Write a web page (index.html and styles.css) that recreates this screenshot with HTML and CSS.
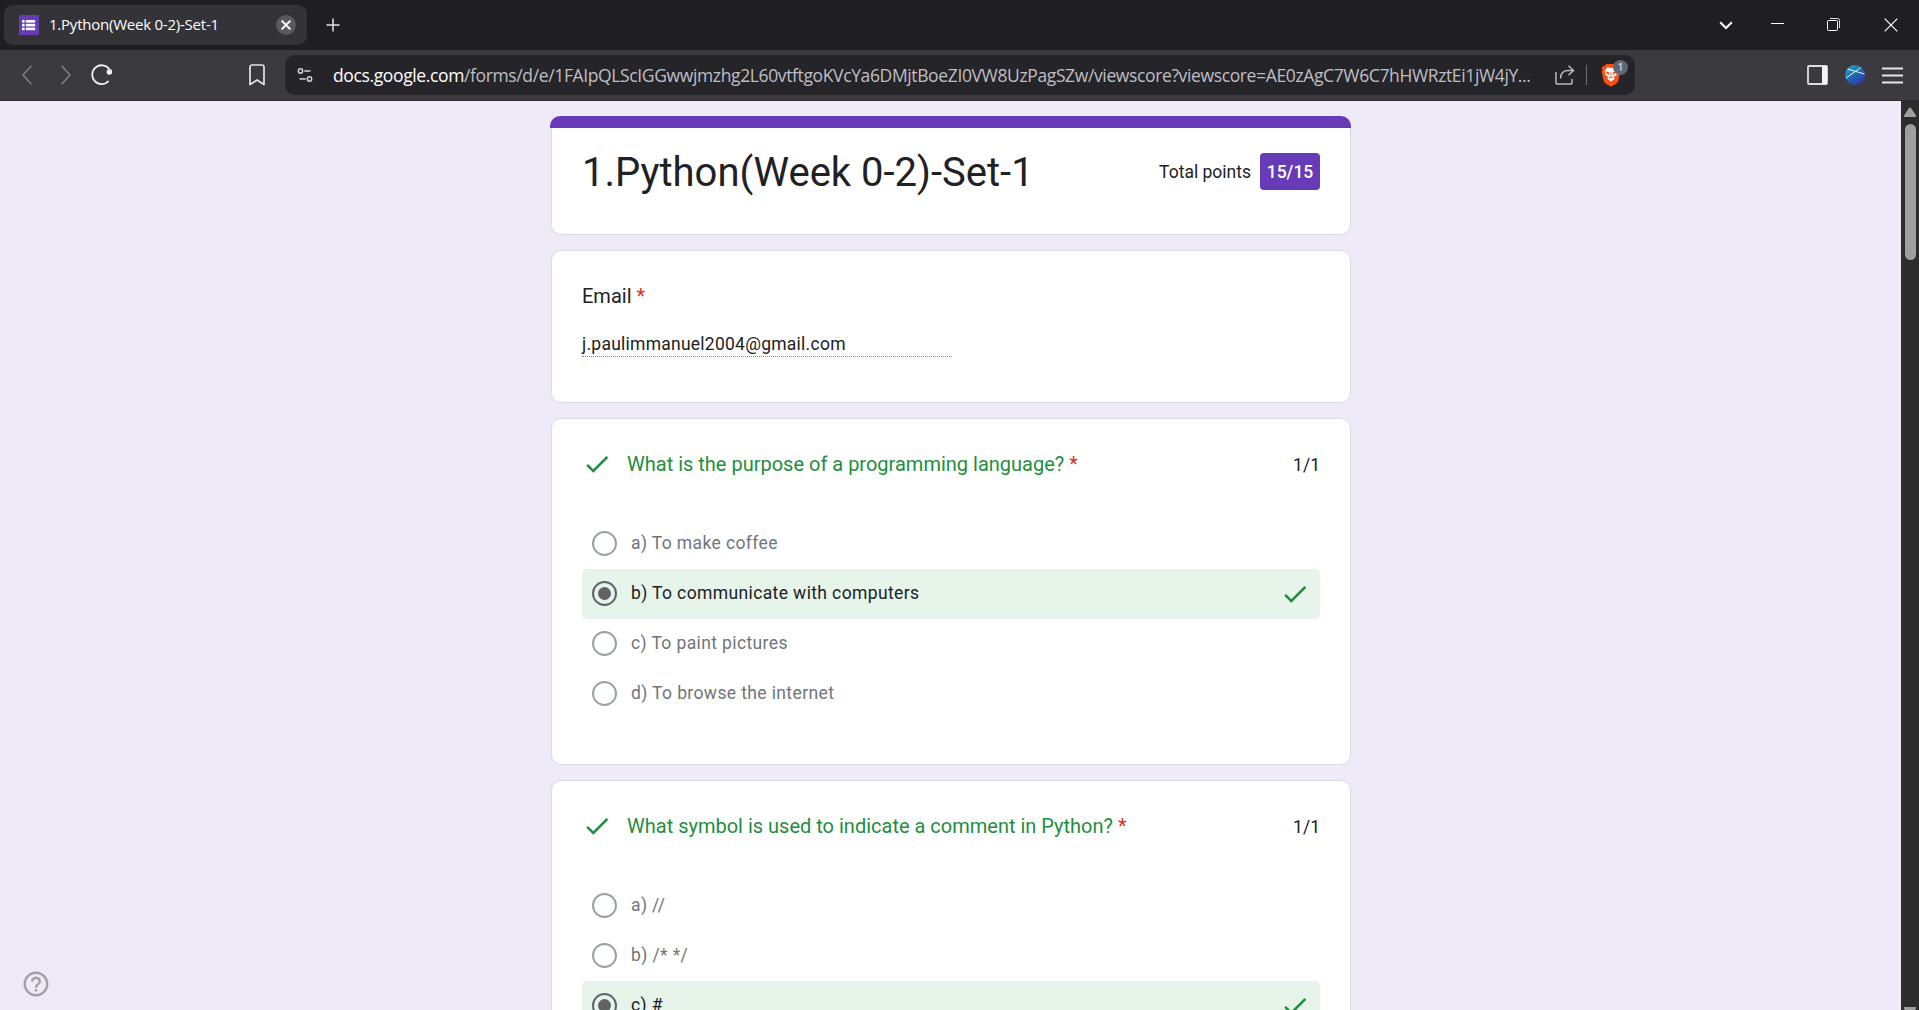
FILE: index.html
```html
<!DOCTYPE html>
<html lang="en">
<head>
<meta charset="utf-8">
<title>1.Python(Week 0-2)-Set-1</title>
<link rel="stylesheet" href="styles.css">
</head>
<body>
<header class="browser">
  <div class="tabstrip">
    <div class="tab">
      <svg class="favicon" viewBox="0 0 20 20"><rect width="20" height="20" rx="1" fill="#673ab7"/><g fill="#fff"><rect x="3" y="5" width="2.6" height="2.6"/><rect x="3" y="8.8" width="2.6" height="2.6"/><rect x="3" y="12.6" width="2.6" height="2.6"/><rect x="6.8" y="5" width="9.4" height="2.6"/><rect x="6.8" y="8.8" width="9.4" height="2.6"/><rect x="6.8" y="12.6" width="9.4" height="2.6"/></g></svg>
      <span class="tab-title">1.Python(Week 0-2)-Set-1</span>
      <svg class="tab-close" viewBox="0 0 20 20"><circle cx="10" cy="10" r="10" fill="#5a595d"/><path d="M5.6 5.6l8.8 8.8M14.4 5.6l-8.8 8.8" stroke="#fff" stroke-width="2"/></svg>
    </div>
    <svg class="new-tab" viewBox="0 0 14 14"><path d="M7 .5v13M.5 7h13" stroke="#e4e4e6" stroke-width="1.5"/></svg>
    <div class="window-controls">
      <svg width="14" height="14" viewBox="0 0 14 14"><path d="M1.2 4.2L7 10l5.800-5.800" fill="none" stroke="#fff" stroke-width="2"/></svg>
      <svg width="13" height="14" viewBox="0 0 13 14"><path d="M0 5.500h13" stroke="#fff"/></svg>
      <svg width="13" height="14" viewBox="0 0 13 14"><rect x=".5" y="2.500" width="10" height="10" rx="1" fill="none" stroke="#fff"/><path d="M3 .5h7.500a2 2 0 0 1 2 2V10" fill="none" stroke="#ddd"/></svg>
      <svg width="14" height="14" viewBox="0 0 14 14"><path d="M.7.7l12.600 12.600M13.300.7L.7 13.300" stroke="#fff" stroke-width="1.200"/></svg>
    </div>
  </div>
  <div class="toolbar">
    <svg class="nav-back" viewBox="0 0 10 20"><path d="M9.500.8L1 10l8.500 9.200" fill="none" stroke="#818085" stroke-width="1.500"/></svg>
    <svg class="nav-forward" viewBox="0 0 10 20"><path d="M.5.8L9 10 .5 19.200" fill="none" stroke="#818085" stroke-width="1.500"/></svg>
    <svg class="nav-reload" viewBox="0 0 22 22"><path d="M17.600 17A9.400 9.400 0 1 1 18.300 5.200" fill="none" stroke="#f3f3f4" stroke-width="1.800"/><path d="M20.300 4.800l.8 4.600-4.400-.4z" fill="#f3f3f4"/><circle cx="18.300" cy="8" r="2.700" fill="#f3f3f4"/></svg>
    <svg class="nav-bookmark" viewBox="0 0 16 22"><path d="M3 1h10a2 2 0 0 1 2 2v17.500l-7-4.500-7 4.500V3a2 2 0 0 1 2-2z" fill="none" stroke="#e3e3e5" stroke-width="1.700" stroke-linejoin="round"/></svg>
    <div class="address">
      <svg class="site-info" viewBox="0 0 16 16"><g fill="none" stroke="#d6d6d9" stroke-width="1.600"><circle cx="3.200" cy="3.200" r="2.300"/><path d="M7.200 3.200h6.600"/><circle cx="12.800" cy="11.700" r="2.300"/><path d="M2.200 11.700h6.600"/></g></svg>
      <span class="url"><span class="host">docs.google.com</span>/forms/d/e/1FAIpQLScIGGwwjmzhg2L60vtftgoKVcYa6DMjtBoeZI0VW8UzPagSZw/viewscore?viewscore=AE0zAgC7W6C7hHWRztEi1jW4jY...</span>
      <svg class="share" viewBox="0 0 20 20"><path d="M1 7v10.200A1.800 1.800 0 0 0 2.800 19h12.400a1.800 1.800 0 0 0 1.800-1.800V14M5.500 13.500C5.500 8.500 8 5.800 13 5.500h5M13.500.8l5 4.700-5 4.700" fill="none" stroke="#b9b9bd" stroke-width="1.500"/></svg>
      <span class="divider"></span>
      <div class="shield">
        <svg viewBox="0 0 20 24"><path d="M5.300 1h9.400l1.700 1.900 1.500-.1 1.500 2.700-.6 1.700.6 1.700-2.300 9.400c-.5 1.500-1.600 2.200-7.100 5.400-5.500-3.200-6.600-3.900-7.100-5.400L.6 8.900l.6-1.700-.6-1.700 1.500-2.700 1.500.1z" fill="#fb5013"/><path d="M6.200 4.300l3.800.7 3.800-.7 2.600 3.600-.8 4-3 2 1.200 1.600-3.800 3.200-3.800-3.200 1.200-1.600-3-2-.8-4z" fill="#fff"/><path d="M4.800 8.800l3.200.8-.6 2zM15.200 8.800l-3.200.8.6 2zM10 9v4.500M8 14l2 .8 2-.8" fill="#fb5013" stroke="#fb5013" stroke-width=".8"/></svg>
        <span class="count">1</span>
      </div>
    </div>
    <svg class="sidebar-icon" viewBox="0 0 21 20"><rect x="1" y="1" width="19" height="18" rx="1" fill="none" stroke="#dededf" stroke-width="1.800"/><path d="M15 1h5v18h-5z" fill="#f4f4f6"/></svg>
    <svg class="profile" viewBox="0 0 20 20"><defs><linearGradient id="sky" x1="0" y1="0" x2=".7" y2="1"><stop offset="0" stop-color="#35b3cc"/><stop offset=".5" stop-color="#176fb0"/><stop offset="1" stop-color="#3b36a8"/></linearGradient></defs><circle cx="10" cy="10" r="10" fill="url(#sky)"/><path d="M1 13L16 2.500M2.500 4l17 5" stroke="#e4f5fb" stroke-width="1"/></svg>
    <svg class="menu" viewBox="0 0 21 17"><path d="M0 1.500h21M0 8.500h21M0 15.500h21" stroke="#e6e6e8" stroke-width="1.800"/></svg>
  </div>
</header>
<div class="viewport">
  <main class="page">
    <section class="card title-card">
      <div class="title-bar"></div>
      <div class="title-row">
        <h1>1.Python(Week 0-2)-Set-1</h1>
        <div class="total">Total points<span class="score">15/15</span></div>
      </div>
    </section>
    <section class="card email-card">
      <div class="label">Email <span class="req">*</span></div>
      <div class="email-value">j.paulimmanuel2004@gmail.com</div>
    </section>
    <section class="card question">
      <div class="q-head">
        <svg class="check" viewBox="0 0 24 24"><path d="M9 16.170L4.830 12l-1.420 1.410L9 19 21 7l-1.410-1.410z"/></svg>
        <h2>What is the purpose of a programming language? <span class="req">*</span></h2>
        <span class="q-score">1/1</span>
      </div>
      <div class="options">
        <div class="option"><i class="radio"></i><span>a) To make coffee</span></div>
        <div class="option chosen"><i class="radio"></i><span>b) To communicate with computers</span><svg class="check" viewBox="0 0 24 24"><path d="M9 16.170L4.830 12l-1.420 1.410L9 19 21 7l-1.410-1.410z"/></svg></div>
        <div class="option"><i class="radio"></i><span>c) To paint pictures</span></div>
        <div class="option"><i class="radio"></i><span>d) To browse the internet</span></div>
      </div>
    </section>
    <section class="card question">
      <div class="q-head">
        <svg class="check" viewBox="0 0 24 24"><path d="M9 16.170L4.830 12l-1.420 1.410L9 19 21 7l-1.410-1.410z"/></svg>
        <h2>What symbol is used to indicate a comment in Python? <span class="req">*</span></h2>
        <span class="q-score">1/1</span>
      </div>
      <div class="options">
        <div class="option"><i class="radio"></i><span>a) //</span></div>
        <div class="option"><i class="radio"></i><span>b) /* */</span></div>
        <div class="option chosen"><i class="radio"></i><span>c) #</span><svg class="check" viewBox="0 0 24 24"><path d="M9 16.170L4.830 12l-1.420 1.410L9 19 21 7l-1.410-1.410z"/></svg></div>
      </div>
    </section>
  </main>
  <div class="scrollbar">
    <svg width="14" height="11" viewBox="0 0 14 11"><path d="M6 1a1.300 1.300 0 0 1 2 0l5 7.500a1 1 0 0 1-.8 1.500H1.800A1 1 0 0 1 1 8.500z" fill="#9f9f9f"/></svg>
    <div class="thumb"></div>
    <svg class="down" width="14" height="11" viewBox="0 0 14 11"><path d="M6 10a1.300 1.300 0 0 0 2 0l5-7.500A1 1 0 0 0 12.200 1H1.800A1 1 0 0 0 1 2.500z" fill="#9f9f9f"/></svg>
  </div>
  <svg class="help" viewBox="0 0 24 24"><path d="M11 18h2v-2h-2v2zm1-16C6.480 2 2 6.480 2 12s4.480 10 10 10 10-4.480 10-10S17.520 2 12 2zm0 18c-4.410 0-8-3.590-8-8s3.590-8 8-8 8 3.590 8 8-3.590 8-8 8zm0-14c-2.210 0-4 1.790-4 4h2c0-1.100.9-2 2-2s2 .9 2 2c0 2-3 1.750-3 5h2c0-2.250 3-2.500 3-5 0-2.210-1.790-4-4-4z" fill="#a3a1a8"/></svg>
</div>
</body>
</html>
```

FILE: styles.css
```css
* { box-sizing: border-box; }

body {
  margin: 0;
  width: 100vw;
  height: 100vh;
  overflow: hidden;
  display: flex;
  flex-direction: column;
  font-family: Roboto, "Liberation Sans", sans-serif;
  color: #202124;
  background: #eeeaf8;
}

svg { display: block; flex: none; }

/* Browser chrome */
.browser { flex: none; font-family: "Open Sans", "Noto Sans", sans-serif; }

.tabstrip {
  height: 50px;
  display: flex;
  align-items: center;
  padding: 0 16px 0 4px;
  background: #1f1e23;
}

.tab {
  width: 303px;
  height: 40px;
  display: flex;
  align-items: center;
  padding: 0 11px 0 15px;
  border-radius: 9px;
  background: #343338;
}

.favicon { width: 20px; height: 20px; }

.tab-title {
  flex: 1;
  margin: -2px 0 0 10px;
  font-size: 15px;
  line-height: 20px;
  letter-spacing: -0.23px;
  color: #fff;
  white-space: nowrap;
}

.tab-close { width: 20px; height: 20px; }
.new-tab { width: 14px; height: 14px; margin-left: 19px; }

.window-controls {
  margin-left: auto;
  display: flex;
  align-items: center;
  gap: 43px;
  padding-right: 5px;
}

.window-controls svg:first-child { margin-right: -5px; }
.window-controls svg:last-child { margin-left: 1px; }

.toolbar {
  height: 51px;
  display: flex;
  align-items: center;
  padding: 0 16px 0 22px;
  background: #3b3a3f;
  border-bottom: 1px solid #2e2d32;
}

.nav-back { width: 10px; height: 20px; }
.nav-forward { width: 10px; height: 20px; margin-left: 29px; }
.nav-reload { width: 22px; height: 22px; margin-left: 20px; }
.nav-bookmark { width: 16px; height: 22px; margin-left: 136px; }

.address {
  width: 1350px;
  height: 40px;
  display: flex;
  align-items: center;
  margin-left: 20px;
  padding-left: 12px;
  border-radius: 10px;
  background: #252429;
}

.site-info { width: 16px; height: 15px; }

.url {
  width: 1198px;
  margin: -1px 0 0 20px;
  font-size: 17.5px;
  line-height: 24px;
  letter-spacing: -0.37px;
  color: #bfbfc4;
  white-space: nowrap;
}

.host { color: #fff; }
.share { width: 20px; height: 20px; margin-left: 24px; }
.divider { width: 1px; height: 20px; margin-left: 11px; background: #6c6b70; }
.shield { position: relative; margin-left: 14px; }
.shield svg { width: 20px; height: 24px; }

.count {
  position: absolute;
  left: 12px;
  top: -3px;
  width: 15px;
  height: 15px;
  border-radius: 50%;
  background: #636572;
  color: #fff;
  font-size: 10px;
  line-height: 15px;
  text-align: center;
}

.sidebar-icon { width: 21px; height: 20px; margin-left: 172px; }
.profile { width: 20px; height: 20px; margin-left: 17px; }
.menu { width: 21px; height: 17px; margin-left: 17px; }

/* Form page */
.viewport {
  flex: 1;
  min-height: 0;
  position: relative;
  display: flex;
  overflow: hidden;
}

.page {
  flex: 1;
  display: flex;
  flex-direction: column;
  align-items: center;
  gap: 15px;
  padding: 15px 0 0 1px;
}

.card {
  flex: none;
  width: 800px;
  padding: 0 30px;
  background: #fff;
  border: 1px solid #dadce0;
  border-radius: 10px;
}

.title-card { height: 119px; border-top: 0; }

.title-bar {
  height: 12px;
  margin: 0 -31px 0 -32px;
  border-radius: 10px 10px 0 0;
  background: #673ab7;
}

.title-row {
  display: flex;
  justify-content: space-between;
  padding-top: 18px;
}

h1, h2 { margin: 0; font-weight: 400; }
h1 { font-size: 40px; line-height: 54px; }

.total {
  display: flex;
  align-items: center;
  gap: 9px;
  height: 37px;
  margin-top: 7px;
  font-size: 17.5px;
}

.score {
  width: 60px;
  height: 37px;
  border-radius: 4px;
  background: #673ab7;
  color: #fff;
  font-weight: 500;
  line-height: 38px;
  text-align: center;
}

.email-card { height: 153px; padding-top: 30px; }
.label { font-size: 20px; line-height: 30px; }
.req { color: #d93025; }

.email-value {
  width: 370px;
  height: 30px;
  margin-top: 16px;
  border-bottom: 1px dotted #80868b;
  font-size: 17.5px;
  line-height: 34px;
  letter-spacing: 0.25px;
}

.question { height: 347px; padding-top: 30px; }

.q-head {
  display: flex;
  align-items: center;
  height: 30px;
}

.check { width: 30px; height: 30px; fill: #1e8e3e; }

h2 {
  flex: 1;
  margin-left: 15px;
  font-size: 20px;
  line-height: 30px;
  color: #1e8e3e;
}

.q-score { padding-top: 2px; font-size: 17.5px; }
.options { margin-top: 40px; }

.option {
  height: 50px;
  display: flex;
  align-items: center;
  gap: 14px;
  padding: 0 10px;
  border-radius: 5px;
  font-size: 17.5px;
  letter-spacing: 0.38px;
  color: #70757a;
}

.option span { margin-top: -2px; }
.option .check { margin-left: auto; }
.chosen { background: #e6f4ea; color: #202124; }

.radio {
  width: 25px;
  height: 25px;
  display: grid;
  place-items: center;
  margin-top: -2px;
  border: 2px solid #9aa0a6;
  border-radius: 50%;
}

.chosen .radio { border-color: #5f6368; }

.chosen .radio::after {
  content: "";
  width: 13px;
  height: 13px;
  border-radius: 50%;
  background: #5f6368;
}

.scrollbar {
  width: 18px;
  display: flex;
  flex-direction: column;
  align-items: center;
  padding-top: 6px;
  background: #2c2c2c;
}

.thumb {
  width: 11px;
  height: 136px;
  margin-top: 6px;
  border-radius: 6px;
  background: #9f9f9f;
}

.down { margin-top: auto; margin-bottom: -7px; }

.help {
  position: absolute;
  left: 21px;
  bottom: 11px;
  width: 30px;
  height: 30px;
}
```
